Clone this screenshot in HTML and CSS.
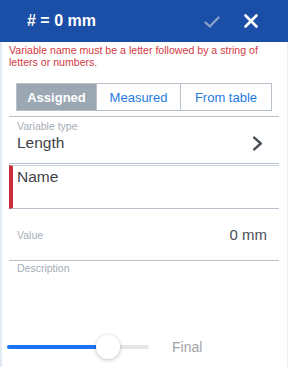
FILE: index.html
```html
<!DOCTYPE html>
<html>
<head>
<meta charset="utf-8">
<link rel="stylesheet" href="styles.css">
</head>
<body>
<div class="app">
  <header class="bar">
    <div class="title"># = 0 mm</div>
    <div class="actions">
      <svg class="check" width="16" height="12" viewBox="0 0 16 12"><path d="M1.5 6.5 L5.8 10.5 L14.5 1.5" fill="none" stroke="#8ea3c8" stroke-width="2.2" stroke-linecap="round" stroke-linejoin="round"/></svg>
      <svg class="close" width="14" height="14" viewBox="0 0 14 14"><path d="M1.5 1.5 L12.5 12.5 M12.5 1.5 L1.5 12.5" fill="none" stroke="#ffffff" stroke-width="2.6" stroke-linecap="round"/></svg>
    </div>
  </header>
  <div class="body">
    <p class="error">Variable name must be a letter followed by a string of letters or numbers.</p>
    <div class="segwrap">
      <div class="seg">
        <div class="opt active">Assigned</div>
        <div class="opt o2">Measured</div>
        <div class="opt o3">From table</div>
      </div>
    </div>
    <div class="field type">
      <div class="label">Variable type</div>
      <div class="row">
        <span class="big">Length</span>
        <svg class="chev" width="11" height="15" viewBox="0 0 11 15"><path d="M2.2 1.6 L8.8 7.5 L2.2 13.4" fill="none" stroke="#4a5058" stroke-width="2.5" stroke-linecap="round" stroke-linejoin="round"/></svg>
      </div>
    </div>
    <div class="field name">
      <span class="big">Name</span>
    </div>
    <div class="field value">
      <span class="label">Value</span>
      <span class="val">0 mm</span>
    </div>
    <div class="field desc">
      <div class="label">Description</div>
    </div>
    <div class="slider">
      <div class="track">
        <div class="fill" style="width:96px"></div>
        <div class="thumb"></div>
      </div>
      <span class="final">Final</span>
    </div>
  </div>
</div>
</body>
</html>
```
FILE: styles.css
```css
* { box-sizing: border-box; }
html, body { margin: 0; padding: 0; }
body {
  width: 288px;
  height: 367px;
  background: #ffffff;
  font-family: "Liberation Sans", Arial, sans-serif;
  overflow: hidden;
}
.app { width: 288px; height: 367px; display: flex; flex-direction: column; }
.bar {
  height: 42px;
  background: #1b4ea6;
  display: flex;
  align-items: center;
  justify-content: space-between;
  padding: 0 30px 0 27px;
  flex: none;
}
.title { color: #fff; font-size: 16px; font-weight: bold; }
.actions { display: flex; align-items: center; gap: 24px; }
.check { display: block; margin-top: 1px; }
.close { display: block; }
.body {
  flex: 1;
  border-left: 2px solid #e3e9f0;
  border-right: 1px solid #e8edf2;
  padding: 0 8px 0 7px;
  display: flex;
  flex-direction: column;
}
.error {
  margin: 2px 0 0 0;
  padding-right: 14px;
  color: #d23a44;
  font-size: 10.6px;
  line-height: 12px;
}
.segwrap { padding: 15px 7px 5px 7px; border-bottom: 1px solid #b7c0cb; }
.seg {
  display: flex;
  height: 28px;
  border: 1px solid #b7c0cb;
}
.opt {
  display: flex;
  align-items: center;
  justify-content: center;
  font-size: 13px;
  color: #1f7be3;
}
.opt.active { width: 79px; background: #9ba7b3; color: #fff; font-weight: bold; }
.opt.o2 { width: 84px; border-left: 1px solid #b7c0cb; }
.opt.o3 { flex: 1; border-left: 1px solid #b7c0cb; }
.field { border-bottom: 1px solid #b7c0cb; }
.label { color: #a6aeb6; font-size: 10.5px; }
.big { color: #3f444a; font-size: 15.5px; }
.type { padding: 2px 0 0 8px; height: 47px; }
.type .label { line-height: 14px; }
.type .row { display: flex; align-items: center; justify-content: space-between; padding-right: 16px; height: 20px; }
.chev { display: block; }
.name {
  margin-top: 1px;
  height: 44px;
  border-top: 1px solid #c7cfd7;
  border-left: 4px solid #c9303d;
  padding: 2px 0 0 4px;
  border-bottom: 1px solid #b7c0cb;
}
.name .big { line-height: 18px; }
.value {
  height: 52px;
  display: flex;
  align-items: center;
  justify-content: space-between;
  padding: 0 12px 0 8px;
}
.val { color: #4a4f55; font-size: 15px; }
.desc { border-bottom: none; padding: 1px 0 0 8px; height: 74px; }
.desc .label { line-height: 12px; }
.slider {
  display: flex;
  align-items: center;
  margin: 0 0 0 -2px;
  height: 24px;
}
.track {
  position: relative;
  width: 142px;
  height: 4px;
  border-radius: 2px;
  background: #e6e6e6;
}
.fill { height: 4px; border-radius: 2px; background: #1a73f0; }
.thumb {
  position: absolute;
  left: 89px;
  top: -10px;
  width: 24px;
  height: 24px;
  border-radius: 50%;
  background: #fff;
  box-shadow: 0 1px 4px rgba(0,0,0,0.25);
}
.final { margin-left: 23px; color: #a0a4a8; font-size: 14px; }
```
